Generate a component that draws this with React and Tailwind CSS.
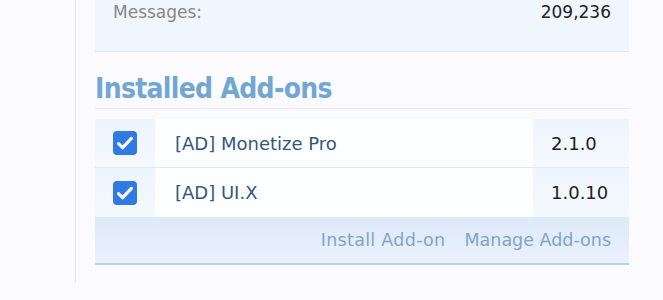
import React from "react";

const addons = [
    { id: "monetize", title: "[AD] Monetize Pro", version: "2.1.0" },
    { id: "uix", title: "[AD] UI.X", version: "1.0.10" },
];

function Check() {
    return (
        <span className="flex h-[24px] w-[24px] items-center justify-center rounded-[4px] bg-[#2f7be3]">
            <svg width="24" height="24" viewBox="0 0 24 24" fill="none">
                <path d="M5.5 12.6l4.2 4.1L18.4 7.4" stroke="#fff" strokeWidth="3.2" strokeLinecap="round" strokeLinejoin="round" />
            </svg>
        </span>
    );
}

export default function App() {
    return (
        <div className="flex h-[300px] w-[663px] bg-[#fbfbfe] font-['DejaVu_Sans',sans-serif]">
            {/* left rail */}
            <div className="h-[283px] w-[76px] border-r border-[#e4e9f1]" />

            <div className="ml-[19px] w-[534px]">
                {/* stats box */}
                <div className="flex h-[52px] items-start justify-between border-b border-[#dce8f5] bg-[#f0f6fd] px-[18px]">
                    <span className="text-[17px] leading-[24px] text-[#888]">Messages:</span>
                    <span className="text-[17px] leading-[24px] text-[#222]">209,236</span>
                </div>

                {/* heading */}
                <h2 className="flex h-[57px] items-end border-b border-[#dfe9f5] pb-[2px] font-['DejaVu_Sans_Condensed','DejaVu_Sans',sans-serif] text-[28px] leading-[34px] font-bold tracking-[-0.7px] text-[#72a6d3]">
                    Installed Add-ons
                </h2>

                {/* add-on list */}
                <div className="mt-[10px]">
                    {addons.map((a, i) => (
                        <div
                            key={a.id}
                            className={`flex h-[49px] ${i === 0 ? "border-b border-[#dfeaf6]" : ""}`}
                        >
                            <div className="flex w-[60px] items-center justify-center bg-gradient-to-b from-[#edf4fc] to-[#f5f9fe]">
                                <Check />
                            </div>
                            <div className="flex flex-1 items-center bg-[#fdfeff] pl-[20px] text-[18px] text-[#33587c]">
                                {a.title}
                            </div>
                            <div className="flex w-[96px] items-center bg-gradient-to-b from-[#eef5fd] to-[#f5f9fe] pl-[18px] text-[18px] text-[#222]">
                                {a.version}
                            </div>
                        </div>
                    ))}

                    {/* footer */}
                    <div className="flex h-[48px] items-center justify-end gap-[19px] border-b-2 border-[#bcd0e6] bg-gradient-to-b from-[#dde9f8] to-[#eaf2fc] pr-[18px] text-[17.5px] text-[#80a5c8]">
                        <span className="tracking-[0.3px]">Install Add-on</span>
                        <span>Manage Add-ons</span>
                    </div>
                </div>
            </div>
        </div>
    );
}
